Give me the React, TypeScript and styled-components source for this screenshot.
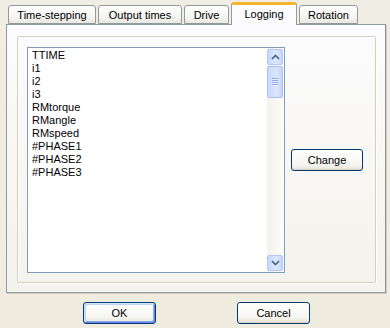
import styled, { createGlobalStyle } from "styled-components";

const GlobalStyle = createGlobalStyle`
  html, body {
    margin: 0;
    padding: 0;
    background: #efede2;
  }
  body {
    font-family: "Liberation Sans", Tahoma, Arial, sans-serif;
    font-size: 11px;
    color: #000;
  }
`;

const Dialog = styled.div`
  width: 390px;
  height: 328px;
  background: linear-gradient(#f0eee4, #efecdf);
  display: flex;
  flex-direction: column;
  box-sizing: border-box;
`;

const TabStrip = styled.div`
  display: flex;
  align-items: flex-end;
  height: 24px;
  padding-left: 8px;
  gap: 2px;
`;

const Tab = styled.div<{ $w: number; $active?: boolean }>`
  position: relative;
  z-index: ${(p) => (p.$active ? 2 : 1)};
  box-sizing: border-box;
  width: ${(p) => p.$w}px;
  height: ${(p) => (p.$active ? 23 : 19)}px;
  margin-bottom: ${(p) => (p.$active ? -1 : 0)}px;
  border: 1px solid #919b9c;
  border-bottom: ${(p) => (p.$active ? "none" : "1px solid #919b9c")};
  border-top: ${(p) => (p.$active ? "3px solid #f5b52e" : "1px solid #919b9c")};
  border-radius: 3px 3px 0 0;
  background: ${(p) =>
    p.$active ? "#fcfcfe" : "linear-gradient(#ffffff, #f3f3ef 70%, #e9e8e2)"};
  display: flex;
  align-items: center;
  justify-content: center;
  padding-bottom: ${(p) => (p.$active ? 2 : 0)}px;
  white-space: nowrap;
`;

const Panel = styled.div`
  box-sizing: border-box;
  margin-left: 6px;
  width: 380px;
  height: 269px;
  border: 1px solid #919b9c;
  border-right-color: #8a9293;
  box-shadow: 1px 1px 0 #d0cdbf;
  background: linear-gradient(#fcfcfe, #f7f6f2 60%, #f3f2ec);
  padding: 11px 0 0 10px;
`;

const GroupBox = styled.div`
  box-sizing: border-box;
  width: 359px;
  height: 247px;
  border: 1px solid #d0d0bf;
  box-shadow: inset 1px 1px 0 #ffffff, 1px 1px 0 #ffffff;
  border-radius: 2px;
  display: flex;
  align-items: center;
  padding-left: 9px;
  gap: 6px;
`;

const ListBox = styled.div`
  box-sizing: border-box;
  width: 258px;
  height: 226px;
  border: 1px solid #7f9db9;
  background: #ffffff;
  display: flex;
`;

const Items = styled.div`
  flex: 1;
  padding: 1px 0 0 4px;
  overflow: hidden;
`;

const Item = styled.div`
  height: 13px;
  line-height: 13px;
  white-space: nowrap;
`;

const ScrollBar = styled.div`
  width: 17px;
  display: flex;
  flex-direction: column;
  background: linear-gradient(90deg, #f3f1ec, #fdfdfa);
  padding: 1px 1px 1px 0;
  box-sizing: border-box;
`;

const ScrollButton = styled.div`
  box-sizing: border-box;
  height: 16px;
  border: 1px solid #b4c8f6;
  border-radius: 2px;
  background: linear-gradient(90deg, #c6d6fc, #dde7fd 60%, #c3d3fb);
  display: flex;
  align-items: center;
  justify-content: center;
`;

const Thumb = styled.div`
  box-sizing: border-box;
  height: 32px;
  margin-top: 1px;
  border: 1px solid #a9bff3;
  border-radius: 2px;
  background: linear-gradient(90deg, #c9d8fc, #dbe5fd 60%, #c6d5fb);
  display: flex;
  flex-direction: column;
  align-items: center;
  justify-content: center;
  gap: 1px;
`;

const Grip = styled.span`
  width: 6px;
  height: 1px;
  background: #8aa5e8;
  box-shadow: 0 1px 0 #eef3fe;
`;

const Spacer = styled.div`
  flex: 1;
`;

const Button = styled.button<{ $w: number; $default?: boolean }>`
  box-sizing: border-box;
  width: ${(p) => p.$w}px;
  height: 22px;
  padding: 0;
  font: inherit;
  color: #000;
  border: 1px solid #003c74;
  border-radius: 3px;
  background: linear-gradient(#ffffff, #f6f5f0 70%, #e6e4dc);
  box-shadow: ${(p) =>
    p.$default
      ? "inset 1px 1px 0 #cee7ff, inset -1px -1px 0 #6982ee, inset 2px 2px 0 #bcd4f6, inset -2px -2px 0 #89ade4"
      : "inset 0 -1px 0 #d6d0c5"};
`;

const Footer = styled.div`
  display: flex;
  padding: 9px 0 0 83px;
  gap: 81px;
`;

const Arrow = ({ up }: { up?: boolean }) => (
  <svg width="9" height="6" viewBox="0 0 9 6">
    <path
      d={up ? "M1 5 L4.5 1.5 L8 5" : "M1 1 L4.5 4.5 L8 1"}
      fill="none"
      stroke="#4d6185"
      strokeWidth="1.6"
    />
  </svg>
);

const items = [
  "TTIME",
  "i1",
  "i2",
  "i3",
  "RMtorque",
  "RMangle",
  "RMspeed",
  "#PHASE1",
  "#PHASE2",
  "#PHASE3",
];

const tabs = [
  { label: "Time-stepping", w: 88 },
  { label: "Output times", w: 84 },
  { label: "Drive", w: 45 },
  { label: "Logging", w: 66, active: true },
  { label: "Rotation", w: 59 },
];

export default function App() {
  return (
    <>
      <GlobalStyle />
      <Dialog>
        <TabStrip>
          {tabs.map((t) => (
            <Tab key={t.label} $w={t.w} $active={t.active}>
              {t.label}
            </Tab>
          ))}
        </TabStrip>
        <Panel>
          <GroupBox>
            <ListBox>
              <Items>
                {items.map((i) => (
                  <Item key={i}>{i}</Item>
                ))}
              </Items>
              <ScrollBar>
                <ScrollButton>
                  <Arrow up />
                </ScrollButton>
                <Thumb>
                  <Grip />
                  <Grip />
                  <Grip />
                  <Grip />
                </Thumb>
                <Spacer />
                <ScrollButton>
                  <Arrow />
                </ScrollButton>
              </ScrollBar>
            </ListBox>
            <Button $w={72}>Change</Button>
          </GroupBox>
        </Panel>
        <Footer>
          <Button $w={73} $default>
            OK
          </Button>
          <Button $w={73}>Cancel</Button>
        </Footer>
      </Dialog>
    </>
  );
}
